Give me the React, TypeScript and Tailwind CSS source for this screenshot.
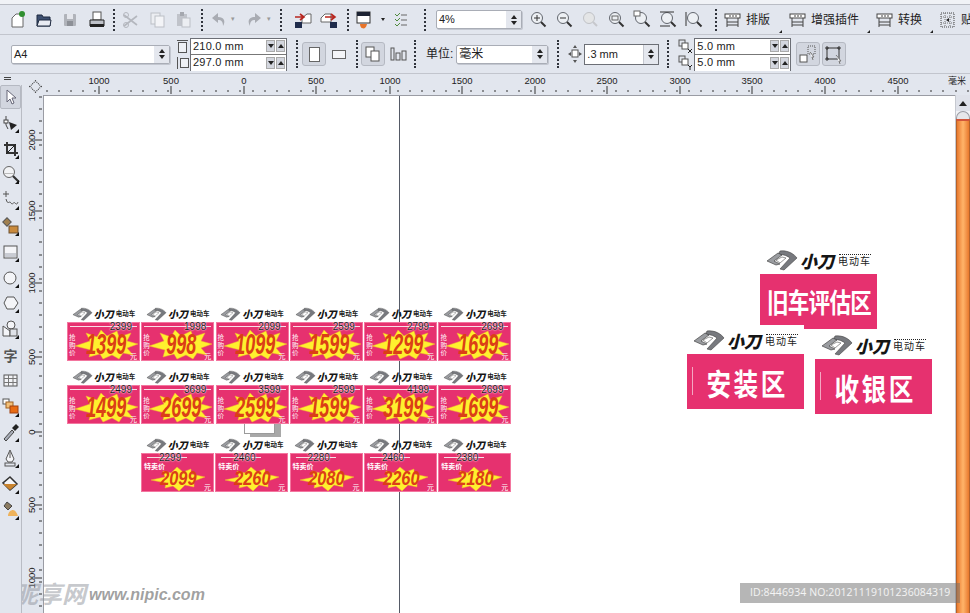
import React from "react";

const ui = "font-['Liberation_Sans','Noto_Sans_CJK_SC',sans-serif]";

function Ico({ w = 20, children }: { w?: number; children: React.ReactNode }) {
  return (
    <svg width={w} height="20" viewBox={`0 0 ${w} 20`} className="shrink-0" fill="none">
      {children}
    </svg>
  );
}

function Sep({ h = "h-[22px]" }: { h?: string }) {
  return <div className={`w-0 ${h} shrink-0 border-l-2 border-dotted border-[#30343c]`} />;
}

function Spin({ className = "" }: { className?: string }) {
  return (
    <div className={`w-[15px] h-[17px] shrink-0 flex flex-col items-center justify-center gap-[2px] bg-[#e4e7ee] ${className}`}>
      <div className="w-0 h-0 border-x-[3px] border-x-transparent border-b-[4px] border-b-[#222]" />
      <div className="w-0 h-0 border-x-[3px] border-x-transparent border-t-[4px] border-t-[#222]" />
    </div>
  );
}

function Combo({ w, children }: { w: string; children: React.ReactNode }) {
  return (
    <div className={`${w} h-[19px] shrink-0 flex items-center justify-between pl-[2px] bg-white border border-[#a9adb6] rounded-[2px] text-[11px] text-[#222] shadow-[1px_1px_0_#c3c7d0]`}>
      <span>{children}</span>
      <Spin />
    </div>
  );
}

function DualInput({ w, a, b }: { w: string; a: string; b: string }) {
  const Row = ({ t, top }: { t: string; top?: boolean }) => (
    <div className={`h-[16px] flex items-center justify-between bg-white ${top ? "border-b border-[#777]" : ""}`}>
      <span className="pl-[2px] text-[11px] tracking-[0.2px] text-[#222]">{t}</span>
      <div className="flex gap-[1px] pr-[1px]">
        <div className="w-[9px] h-[12px] bg-[#d3d6de] border border-[#aaa] flex items-center justify-center">
          <div className="w-0 h-0 border-x-[3px] border-x-transparent border-t-[4px] border-t-[#222]" />
        </div>
        <div className="w-[9px] h-[12px] bg-[#d3d6de] border border-[#aaa] flex items-center justify-center">
          <div className="w-0 h-0 border-x-[3px] border-x-transparent border-b-[4px] border-b-[#222]" />
        </div>
      </div>
    </div>
  );
  return (
    <div className={`${w} h-[33px] shrink-0 border border-[#6c6f76] flex flex-col`}>
      <Row t={a} top />
      <Row t={b} />
    </div>
  );
}

function Pressed({ children }: { children: React.ReactNode }) {
  return (
    <div className="w-[24px] h-[24px] shrink-0 flex items-center justify-center bg-[#d2d6df] border border-[#b5b9c2] rounded-[3px]">
      {children}
    </div>
  );
}

function Corner() {
  return <div className="w-0 h-0 self-end mb-[1px] border-l-[3px] border-l-transparent border-b-[3px] border-b-[#222]" />;
}

function MenuBtn({ label, ml, glyph }: { label: string; ml: string; glyph?: boolean }) {
  return (
    <div className={`flex items-center gap-[5px] shrink-0 ${ml}`}>
      {glyph ? (
        <Ico w={17}>
          <rect x="2" y="3" width="13" height="14" stroke="#444" strokeDasharray="1 1" />
          <path d="M2 7h13M2 13h13M6 3v14M11 3v14" stroke="#777" strokeDasharray="1 1" />
          <path d="M10 8v4l-3-2z" fill="#222" />
        </Ico>
      ) : (
        <Ico w={17}>
          <rect x="1" y="4" width="15" height="4" fill="#fff" stroke="#444" />
          <path d="M3 8v9M14 8v9M3 12h11M3 15h11M6 5v2M9 5v2M12 5v2" stroke="#444" />
        </Ico>
      )}
      <span className="text-[12px] text-[#222] whitespace-nowrap">{label}</span>
    </div>
  );
}

function Zoom({ inner }: { inner?: React.ReactNode }) {
  return (
    <Ico w={18}>
      <circle cx="8" cy="8" r="5.5" fill="#edf0f4" stroke="#62666e" />
      <path d="M12 12l4.5 4.5" stroke="#333" strokeWidth="2" />
      {inner}
    </Ico>
  );
}

function Top1() {
  return (
    <div className="h-[29px] flex items-center pl-[10px] shrink-0">
      <Ico w={16}>
        <path d="M2 8l4-4h7v13H2z" fill="#fff" stroke="#666" />
        <circle cx="12" cy="4" r="3" fill="#2f8f2f" />
      </Ico>
      <div className="ml-[10px]">
        <Ico w={16}>
          <path d="M1 5h5l1 2h7v9H1z" fill="#3d4f70" stroke="#1f2a40" />
          <path d="M1 16l2-6h12l-1 6z" fill="#e8ebf2" stroke="#1f2a40" />
        </Ico>
      </div>
      <div className="ml-[11px]">
        <Ico w={15}>
          <rect x="1" y="4" width="12" height="12" rx="1" fill="#b0b3ba" />
          <rect x="4" y="4" width="6" height="5" fill="#e4e6ec" />
          <rect x="4" y="11" width="6" height="5" fill="#8d9097" />
        </Ico>
      </div>
      <div className="ml-[11px]">
        <Ico w={16}>
          <rect x="4" y="2" width="8" height="8" fill="#fff" stroke="#555" />
          <path d="M1 10h14v6H1z" fill="#bfc2c9" stroke="#222" />
          <path d="M1 14h14v3H1z" fill="#222" />
        </Ico>
      </div>
      <div className="ml-[8px]"><Sep /></div>
      <div className="ml-[7px]">
        <Ico w={17}>
          <path d="M2 16L15 6M2 5l13 10" stroke="#b4b7be" strokeWidth="1.6" />
          <circle cx="4" cy="5" r="2.5" stroke="#b4b7be" />
          <circle cx="4" cy="15" r="2.5" stroke="#b4b7be" />
        </Ico>
      </div>
      <div className="ml-[11px]">
        <Ico w={15}>
          <rect x="1" y="3" width="9" height="11" fill="#eceef2" stroke="#bcbfc6" />
          <rect x="5" y="6" width="9" height="11" fill="#f3f4f7" stroke="#bcbfc6" />
        </Ico>
      </div>
      <div className="ml-[11px]">
        <Ico w={15}>
          <rect x="1" y="4" width="10" height="12" fill="#c0c3ca" />
          <rect x="4" y="2" width="4" height="4" fill="#a5a8af" />
          <rect x="6" y="8" width="8" height="9" fill="#eceef2" stroke="#bcbfc6" />
        </Ico>
      </div>
      <div className="ml-[10px]"><Sep /></div>
      <div className="ml-[7px]">
        <Ico w={17}>
          <path d="M8 3L2 8l6 5V10c3 0 5 1 5 6 3-5 1-9-5-9z" fill="#a9acb3" />
        </Ico>
      </div>
      <span className="ml-[4px] text-[7px] text-[#999]">▾</span>
      <div className="ml-[11px]">
        <Ico w={17}>
          <path d="M9 3l6 5-6 5V10c-3 0-5 1-5 6-3-5-1-9 5-9z" fill="#a9acb3" />
        </Ico>
      </div>
      <span className="ml-[4px] text-[7px] text-[#999]">▾</span>
      <div className="ml-[9px]"><Sep /></div>
      <div className="ml-[12px]">
        <Ico w={18}>
          <path d="M8 8l5-4h4v9H8z" fill="#fff" stroke="#666" />
          <path d="M1 7h8M6 4l4 3-4 3" stroke="#b8261f" strokeWidth="1.6" />
          <rect x="1" y="12" width="7" height="6" fill="#1f2c4c" />
        </Ico>
      </div>
      <div className="ml-[8px]">
        <Ico w={18}>
          <path d="M1 8l4-4h6v8H1z" fill="#fff" stroke="#666" />
          <path d="M5 7h9M11 4l4 3-4 3" stroke="#b8261f" strokeWidth="1.6" />
          <rect x="10" y="12" width="7" height="6" fill="#1f2c4c" />
        </Ico>
      </div>
      <div className="ml-[9px]"><Sep /></div>
      <div className="ml-[7px]">
        <Ico w={15}>
          <rect x="1" y="2" width="13" height="11" fill="#fff" stroke="#333" />
          <rect x="1" y="2" width="13" height="4" fill="#1d2333" />
          <path d="M4 14c0 3 2 5 3 4 0 1 3 1 4-4z" fill="#e8742a" />
        </Ico>
      </div>
      <span className="ml-[10px] w-0 h-0 border-x-[2.5px] border-x-transparent border-t-[3px] border-t-[#222]" />
      <div className="ml-[9px]">
        <Ico w={14}>
          <path d="M1 4l2 2 3-3M1 9l2 2 3-3M1 14l2 2 3-3" stroke="#4f8a3c" />
          <path d="M7 5h6M7 10h6M7 15h6" stroke="#666" />
        </Ico>
      </div>
      <div className="ml-[16px]"><Sep /></div>
      <div className="ml-[10px]">
        <Combo w="w-[86px]">4%</Combo>
      </div>
      <div className="ml-[7px] flex items-center gap-[8px]">
        <Zoom inner={<path d="M5 8h6M8 5v6" stroke="#333" />} />
        <Zoom inner={<path d="M5 8h6" stroke="#333" />} />
        <Ico w={18}>
          <circle cx="8" cy="8" r="5.5" fill="#e4e5e6" stroke="#c0c2c6" />
          <path d="M12 12l4 4" stroke="#c6c8cc" strokeWidth="2" />
        </Ico>
        <Zoom inner={<rect x="5" y="6" width="6" height="4" stroke="#666" />} />
        <Zoom inner={<rect x="1" y="1" width="6" height="5" fill="#fff" stroke="#666" />} />
        <Zoom inner={<path d="M1 2h14M1 16h10" stroke="#333" />} />
        <Zoom inner={<path d="M1 2v14" stroke="#333" />} />
      </div>
      <div className="ml-[12px]"><Sep /></div>
      <MenuBtn label="排版" ml="ml-[7px]" />
      <div className="ml-[9px] h-full flex"><Corner /></div>
      <MenuBtn label="增强插件" ml="ml-[7px]" />
      <div className="ml-[8px] h-full flex"><Corner /></div>
      <MenuBtn label="转换" ml="ml-[6px]" />
      <div className="ml-[8px] h-full flex"><Corner /></div>
      <MenuBtn label="贴齐" ml="ml-[6px]" glyph />
    </div>
  );
}

function Top2() {
  return (
    <div className="h-[38px] flex items-center pl-[11px] shrink-0">
      <Combo w="w-[159px]">A4</Combo>
      <div className="ml-[5px] w-[15px] flex flex-col items-center gap-[2px]">
        <svg width="13" height="15" viewBox="0 0 13 15" fill="none"><rect x="2.500" y="3.500" width="8" height="10" stroke="#555" fill="#eef0f4" /><path d="M1 1.500h11" stroke="#555" /></svg>
        <svg width="14" height="14" viewBox="0 0 14 14" fill="none"><path d="M1.500 1v12" stroke="#555" /><rect x="4.500" y="2.500" width="8" height="9" stroke="#555" fill="#eef0f4" /></svg>
      </div>
      <div className="ml-[0px]"><DualInput w="w-[97px]" a="210.0 mm" b="297.0 mm" /></div>
      <div className="ml-[9px]"><Sep h="h-[28px]" /></div>
      <div className="ml-[4px]">
        <Pressed><div className="w-[11px] h-[15px] bg-white border border-[#666]" /></Pressed>
      </div>
      <div className="ml-[6px] w-[14px] h-[9px] border border-[#666] bg-[#f4f5f8]" />
      <div className="ml-[10px]"><Sep h="h-[28px]" /></div>
      <div className="ml-[3px]">
        <Pressed>
          <Ico w={16}>
            <rect x="1" y="3" width="8" height="10" fill="#fff" stroke="#555" />
            <rect x="6" y="7" width="8" height="10" fill="#fff" stroke="#555" />
          </Ico>
        </Pressed>
      </div>
      <div className="ml-[5px]">
        <Ico w={17}>
          <rect x="1" y="4" width="3" height="12" stroke="#555" />
          <rect x="6" y="9" width="4" height="7" stroke="#555" />
          <rect x="12" y="7" width="4" height="9" stroke="#555" />
        </Ico>
      </div>
      <div className="ml-[7px]"><Sep h="h-[28px]" /></div>
      <span className="ml-[10px] text-[12px] text-[#222] whitespace-nowrap">单位:</span>
      <div className="ml-[3px]"><Combo w="w-[92px]"><span className="text-[12px]">毫米</span></Combo></div>
      <div className="ml-[9px]"><Sep h="h-[28px]" /></div>
      <div className="ml-[9px]">
        <Ico w={14}>
          <rect x="4" y="6" width="6" height="7" fill="#fff" stroke="#555" />
          <path d="M7 1l2 3H5zM7 19l2-3H5zM0 10l3-2v4zM14 10l-3-2v4z" fill="#555" />
        </Ico>
      </div>
      <div className="ml-[2px] w-[75px] h-[21px] shrink-0 flex items-center justify-between bg-white border border-[#6c6f76] pl-[2px] text-[11px] text-[#222]">
        <span>.3 mm</span>
        <Spin className="h-[19px] border-l border-[#c4c7cf]" />
      </div>
      <div className="ml-[8px]"><Sep h="h-[28px]" /></div>
      <div className="ml-[9px] w-[15px] flex flex-col gap-[1px] items-center">
        <svg width="15" height="15" viewBox="0 0 15 15" fill="none"><rect x="1" y="1" width="6" height="6" stroke="#555" /><rect x="4" y="4" width="6" height="6" fill="#fff" stroke="#555" /><path d="M10 10l4 4M14 10l-4 4" stroke="#222" /></svg>
        <svg width="15" height="15" viewBox="0 0 15 15" fill="none"><rect x="1" y="1" width="6" height="6" stroke="#555" /><rect x="4" y="4" width="6" height="6" fill="#fff" stroke="#555" /><path d="M10 10l2 2 2-2M12 12v3" stroke="#222" /></svg>
      </div>
      <div className="ml-[1px]"><DualInput w="w-[97px]" a="5.0 mm" b="5.0 mm" /></div>
      <div className="ml-[5px]">
        <Pressed>
          <Ico w={20}>
            <rect x="2" y="11" width="7" height="7" fill="#fff" stroke="#555" />
            <rect x="10" y="2" width="7" height="8" strokeDasharray="1 1" stroke="#555" />
            <path d="M12 8l4 5-2 0 1 3" stroke="#777" fill="#fff" />
          </Ico>
        </Pressed>
      </div>
      <div className="ml-[2px]">
        <Pressed>
          <Ico w={20}>
            <rect x="3" y="4" width="12" height="11" stroke="#333" />
            <path d="M1 4h4M13 4h4M1 15h4M3 2v4M15 2v4M3 13v4" stroke="#333" />
            <path d="M12 11l5 6-2 0 1 3" stroke="#777" fill="#fff" />
          </Ico>
        </Pressed>
      </div>
    </div>
  );
}

const hLabels: [number, string][] = [
  [99, "1000"], [171, "500"], [244, "0"], [316, "500"], [390, "1000"], [462, "1500"],
  [535, "2000"], [607, "2500"], [680, "3000"], [752, "3500"], [825, "4000"], [898, "4500"],
];
const vLabels: [number, string][] = [
  [140, "2000"], [211, "1500"], [283, "1000"], [357, "500"], [432, "0"], [505, "500"], [578, "1000"],
];

function HRuler() {
  const ticks: number[] = [];
  for (let x = 26.5; x < 955; x += 12.12) ticks.push(Math.round(x));
  return (
    <svg width="970" height="21" className="block absolute left-0 top-0">
      {ticks.map((x) => (
        <line key={x} x1={x + 20} x2={x + 20} y1="16" y2="18" stroke="#333" />
      ))}
      {hLabels.map(([x, t], i) => (
        <g key={i}>
          <line x1={x} x2={x} y1="12" y2="20" stroke="#333" />
          <text x={x} y="10" textAnchor="middle" fontSize="9.5" fontFamily="Liberation Sans" fill="#222">{t}</text>
        </g>
      ))}
      <text x="957" y="10" textAnchor="middle" fontSize="9" fontFamily="Noto Sans CJK SC" fill="#222">毫米</text>
    </svg>
  );
}

function VRuler() {
  const ticks: number[] = [];
  for (let y = 2; y < 520; y += 12.12) ticks.push(Math.round(y));
  return (
    <svg width="21" height="518" className="block shrink-0">
      {ticks.map((y) => (
        <line key={y} x1="17" x2="20" y1={y} y2={y} stroke="#333" />
      ))}
      {vLabels.map(([y, t], i) => (
        <g key={i}>
          <line x1="12" x2="20" y1={y - 95} y2={y - 95} stroke="#333" />
          <text transform={`translate(13 ${y - 95}) rotate(-90)`} textAnchor="middle" fontSize="9.5" fontFamily="Liberation Sans" fill="#222">{t}</text>
        </g>
      ))}
    </svg>
  );
}

function Tool({ children, corner = true, active }: { children: React.ReactNode; corner?: boolean; active?: boolean }) {
  return (
    <div className={`relative h-[24px] w-[21px] flex items-center justify-center shrink-0 ${active ? "bg-[#d2d6df] border border-[#b5b9c2] rounded-[2px]" : ""}`}>
      {children}
      {corner && <div className="absolute right-[2px] bottom-[2px] w-0 h-0 border-l-[4px] border-l-transparent border-b-[4px] border-b-[#111]" />}
    </div>
  );
}

function Toolbox() {
  return (
    <div className="relative z-10 w-[22px] -mt-[10px] shrink-0 bg-[#e2e6ee] border-r border-[#b9bcc4] flex flex-col gap-[1.800px]">
      <Tool active corner={false}>
        <svg width="14" height="16" viewBox="0 0 14 16"><path d="M3 1v12l3-3 2 5 2-1-2-5h4z" fill="#fff" stroke="#667" /></svg>
      </Tool>
      <Tool>
        <svg width="16" height="18" viewBox="0 0 16 18"><path d="M3 2v9l2 4" stroke="#444" fill="none" /><rect x="1" y="6" width="4" height="3" fill="#fff" stroke="#444" /><path d="M6 8l8 3-6 5z" fill="#222" /></svg>
      </Tool>
      <Tool>
        <svg width="16" height="18" viewBox="0 0 16 18"><path d="M4 2v11h11M1 5h11v11" stroke="#333" strokeWidth="2" fill="none" /><path d="M3 14L13 4" stroke="#222" /></svg>
      </Tool>
      <Tool>
        <svg width="18" height="18" viewBox="0 0 18 18"><circle cx="7" cy="7" r="5.5" fill="#f2f3f5" stroke="#666" /><path d="M2 8h10v1H2z" fill="#bbb" /><path d="M11 11l6 6" stroke="#333" strokeWidth="2.2" /></svg>
      </Tool>
      <Tool>
        <svg width="18" height="18" viewBox="0 0 18 18" fill="none"><path d="M1 3h6M4 0v6" stroke="#555" /><path d="M4 8c2 7 3 1 5 4s2-2 4 0 2 1 3-1" stroke="#555" /></svg>
      </Tool>
      <Tool>
        <svg width="18" height="18" viewBox="0 0 18 18"><rect x="2" y="2" width="6" height="6" transform="rotate(45 5 5)" fill="#a08050" stroke="#555" /><rect x="7" y="9" width="9" height="7" fill="#c98a3c" stroke="#6c5030" /></svg>
      </Tool>
      <Tool>
        <svg width="16" height="16" viewBox="0 0 16 16"><rect x="1" y="2" width="13" height="12" fill="#f4f5f8" stroke="#555" /><rect x="2" y="9" width="11" height="4" fill="#c9ccd3" /></svg>
      </Tool>
      <Tool>
        <svg width="16" height="16" viewBox="0 0 16 16"><circle cx="7" cy="8" r="6" fill="#f4f5f8" stroke="#555" /></svg>
      </Tool>
      <Tool>
        <svg width="16" height="16" viewBox="0 0 16 16"><path d="M4 2h7l4 6-4 6H4L1 8z" fill="#f4f5f8" stroke="#555" /></svg>
      </Tool>
      <Tool>
        <svg width="18" height="18" viewBox="0 0 18 18"><circle cx="9" cy="5" r="4" fill="#f4f5f8" stroke="#555" /><path d="M1 6l7 5v5H1z" fill="#f4f5f8" stroke="#555" /><rect x="8" y="9" width="7" height="7" fill="#dfe2e8" stroke="#555" /></svg>
      </Tool>
      <Tool corner={false}>
        <span className="text-[14px] font-bold text-[#555] font-['Noto_Sans_CJK_SC',sans-serif] leading-none">字</span>
      </Tool>
      <Tool corner={false}>
        <svg width="16" height="14" viewBox="0 0 16 14" fill="none"><rect x="1" y="1" width="13" height="11" fill="#f2f3f6" stroke="#555" /><path d="M1 4.500h13M1 8.500h13M5.500 1v11M10 1v11" stroke="#777" /></svg>
      </Tool>
      <Tool>
        <svg width="18" height="18" viewBox="0 0 18 18"><rect x="1" y="1" width="6" height="5" fill="#fff" stroke="#555" /><rect x="4" y="4" width="7" height="6" fill="#f2c078" stroke="#a06020" /><rect x="8" y="8" width="8" height="7" fill="#e86b12" stroke="#a04010" /></svg>
      </Tool>
      <Tool>
        <svg width="18" height="18" viewBox="0 0 18 18"><path d="M2 16l8-9 2 2-8 9z" fill="#a8adb8" stroke="#444" /><path d="M10 5l4-4 3 3-4 4z" fill="#222" /></svg>
      </Tool>
      <Tool>
        <svg width="16" height="18" viewBox="0 0 16 18" fill="none"><path d="M7 1l4 9-2 3H5l-2-3z" fill="#f4f5f8" stroke="#555" /><path d="M7 3v6" stroke="#555" /><rect x="2" y="14" width="10" height="3" stroke="#555" /></svg>
      </Tool>
      <Tool>
        <svg width="18" height="18" viewBox="0 0 18 18"><path d="M8 2l7 7-7 6-7-7z" fill="#f4f5f8" stroke="#333" strokeWidth="1.500" /><path d="M1 9h14l-7 6z" fill="#c9842f" /></svg>
      </Tool>
      <Tool>
        <svg width="18" height="18" viewBox="0 0 18 18"><path d="M5 1l5 4-4 4-4-4z" fill="#8a7a60" stroke="#444" /><path d="M6 15c0-4 3-6 5-6s4 3 5 6z" fill="#eeb25a" /></svg>
      </Tool>
    </div>
  );
}

const starBig = "8,24 23,19 19,11 30,15 34,8 40,14 50,9 52,15 64,11 60,19 71,22 60,26 66,33 56,31 52,37 45,33 36,37 33,32 22,35 24,28";
const starSale = "10,27 24,24 22,18 30,20 36,14 42,19 50,16 50,21 64,24 53,28 53,34 44,32 38,38 32,33 24,35 25,30";

function LogoMark({ w, h }: { w: number; h: number }) {
  return (
    <svg width={w} height={h} viewBox="0 0 32 22" fill="none" className="shrink-0">
      <path d="M14 2C22 1 28 5 31 9L18 21 14 20 24 9C20 6 16 5 12 6z" fill="#77797e" stroke="#444" strokeWidth="0.6" />
      <path d="M1 12L12 4 16 6 8 12 14 15 10 16z" fill="#9a9ca0" stroke="#333" strokeWidth="0.6" />
      <path d="M10 11L16 8 20 9 14 14z" fill="#fff" stroke="#555" strokeWidth="0.6" />
    </svg>
  );
}

function Logo({ big }: { big?: boolean }) {
  return (
    <div className={`flex items-center justify-center ${big ? "h-[24px] gap-[2px]" : "h-[15px] gap-[1px]"}`}>
      <LogoMark w={big ? 32 : 21} h={big ? 22 : 14} />
      <span className={`font-['Noto_Sans_CJK_SC',sans-serif] font-black italic text-[#151515] leading-none ${big ? "text-[17px]" : "text-[10px]"}`}>小刀</span>
      <div className={`flex flex-col items-center leading-none ${big ? "ml-[2px]" : "ml-[1px]"}`}>
        {big && <div className="w-[32px] h-[1px] border-t border-dotted border-[#222] mb-[1px]" />}
        <span className={`font-['Noto_Sans_CJK_SC',sans-serif] text-[#222] ${big ? "text-[10px] tracking-[1px]" : "text-[6.500px] font-bold"}`}>电动车</span>
      </div>
    </div>
  );
}

function Tag({ oldP, price, sale }: { oldP: string; price: string; sale?: boolean }) {
  return (
    <div className="w-[73px] shrink-0 flex flex-col items-center">
      <Logo />
      <div className="relative w-[73px] h-[39px] mt-[1px] bg-[#e6316f] overflow-hidden shadow-[inset_0_0_0_1px_#f3769f]">
        <div className={`absolute top-[4px] h-[1px] bg-[#f9dde6] ${sale ? "left-[6px] w-[40px]" : "left-[3px] w-[67px]"}`} />
        <span className={`absolute top-0 text-[10px] font-['Liberation_Sans',sans-serif] leading-[10px] text-[#1e1418] [text-shadow:0_0_1px_#fff,0_0_2px_#fff] ${sale ? "left-[18px]" : "right-[8px]"}`}>{oldP}</span>
        <svg width="73" height="39" viewBox="0 0 73 39" className="absolute inset-0">
          <polygon points={sale ? starSale : starBig} fill="#fff02e" stroke="#f0b030" strokeWidth="0.5" />
        </svg>
        {sale ? (
          <span className="absolute left-[3px] top-[9px] text-[7px] leading-[8px] text-white font-bold font-['Noto_Sans_CJK_SC',sans-serif]">特卖价</span>
        ) : (
          <span className="absolute left-[2px] top-[12px] w-[7px] text-[6.500px] leading-[7.500px] text-white font-['Noto_Sans_CJK_SC',sans-serif]">抢购价</span>
        )}
        <div className={`absolute flex justify-center ${sale ? "left-0 right-[-1px] top-[14px]" : "left-[6px] right-0 top-[8px]"}`}>
          <span className={`font-['Liberation_Sans',sans-serif] font-bold italic leading-none text-[#db3f16] ${sale ? "text-[21px] scale-x-[0.78]" : "text-[29px] scale-x-[0.62]"}`}>{price}</span>
        </div>
        <span className="absolute right-[3px] bottom-[1px] text-[7px] leading-[8px] text-white font-['Noto_Sans_CJK_SC',sans-serif]">元</span>
      </div>
    </div>
  );
}

const row1 = [["2399", "1399"], ["1998", "998"], ["2099", "1099"], ["2599", "1599"], ["2799", "1299"], ["2699", "1699"]];
const row2 = [["2499", "1499"], ["3699", "2699"], ["3599", "2599"], ["2599", "1599"], ["4199", "3199"], ["2699", "1699"]];
const row3 = [["2299", "2099"], ["2460", "2260"], ["2280", "2080"], ["2460", "2260"], ["2380", "2180"]];

function TagRow({ items, sale }: { items: string[][]; sale?: boolean }) {
  return (
    <div className="flex gap-[1.300px]">
      {items.map(([o, p], i) => (
        <Tag key={i} oldP={o} price={p} sale={sale} />
      ))}
    </div>
  );
}

function Sign({ text, className, wide }: { text: string; className: string; wide?: boolean }) {
  return (
    <div className={`absolute ${className}`}>
      <Logo big />
      <div className="relative mt-[2px] h-[55px] w-[117px] bg-[#e6316f] flex items-center justify-center">
        {!wide && <div className="absolute left-[5px] top-[13px] w-[1px] h-[28px] bg-[#f3a8c2]" />}
        {wide && <div className="absolute left-0 bottom-0 w-[44px] h-[4px] bg-white" />}
        <span className={`font-['Noto_Sans_CJK_SC',sans-serif] font-bold text-white whitespace-nowrap leading-none ${wide ? "text-[27px] tracking-[-1px] scale-x-[0.8]" : "text-[30px] tracking-[3px] scale-x-[0.82] pl-[4px]"}`}>{text}</span>
      </div>
    </div>
  );
}

export default function App() {
  return (
    <div className={`relative w-[970px] h-[613px] overflow-hidden flex flex-col bg-[#e2e6ee] ${ui}`}>
      <div className="h-[5px] shrink-0 bg-[#f0f2f6] border-b border-[#b9bcc4]" />
      <Top1 />
      <div className="h-[1px] shrink-0 bg-[#c2c5cd]" />
      <Top2 />
      <div className="h-[1px] shrink-0 bg-[#c2c5cd]" />

      <div className="relative h-[21px] shrink-0">
        <div className="absolute left-[4px] top-[3px] w-[7px] h-[3px] border-y border-[#444]" />
        <div className="absolute left-[31px] top-[8px] w-[9px] h-[9px] border border-dotted border-[#333] rotate-45" />
        <HRuler />
      </div>

      <div className="flex flex-1 min-h-0">
        <Toolbox />
        <VRuler />
        <div className="relative flex-1 bg-white border-t border-l border-[#9a9ca4]">
          {/* page edge */}
          <div className="absolute left-[355px] top-0 bottom-0 w-[1px] bg-[#555a66]" />
          <div className="absolute left-[200px] top-[322px] w-[31px] h-[16px] bg-white border border-[#9b9b9b] shadow-[6px_3px_0_#a8a8a8]" />

          <div className="absolute left-[23px] top-[210px] flex flex-col items-start gap-[8px]">
            <TagRow items={row1} />
            <TagRow items={row2} />
            <div className="ml-[74px] mt-[5px]">
              <TagRow items={row3} sale />
            </div>
          </div>

          <Sign text="旧车评估区" className="left-[716px] top-[152px]" wide />
          <Sign text="安装区" className="left-[643px] top-[232px]" />
          <Sign text="收银区" className="left-[771px] top-[237px]" />
        </div>

        <div className="relative w-[15px] shrink-0 bg-[#f2f3f6] border-l border-[#c6c9d0] flex flex-col">
          <div className="h-[16px] bg-[#dfe2ea] flex items-center justify-center">
            <div className="w-0 h-0 border-x-[4px] border-x-transparent border-b-[5px] border-b-[#222]" />
          </div>
          <div className="h-[8px] rounded-t-[7px] bg-[#e6e7ea] border-t border-x border-[#9a9ca4]" />
          <div className="flex-1 border-x border-[#b5622a] bg-gradient-to-r from-[#e8792c] via-[#ffb469] to-[#e8792c] border-t-2 border-t-[#d2553a]" />
        </div>
      </div>

      {/* watermark */}
      <div className="absolute left-[740px] top-[583px] w-[220px] h-[20px] bg-[#6e6e6e]/50 flex items-center pl-[10px] text-[10.500px] tracking-[0.1px] text-white/85 font-['Open_Sans',sans-serif] whitespace-nowrap">
        ID:8446934 NO:20121119101236084319
      </div>
      <div className="absolute left-[14px] top-[581px] flex items-center gap-[3px] text-[#8f939c]/50 italic font-bold whitespace-nowrap font-['Noto_Sans_CJK_SC',sans-serif]">
        <span className="text-[24px] leading-none">昵享网</span>
        <span className="text-[16px] leading-none mt-[4px] font-['Liberation_Sans',sans-serif] text-[#777]/70">www.nipic.com</span>
      </div>
    </div>
  );
}
